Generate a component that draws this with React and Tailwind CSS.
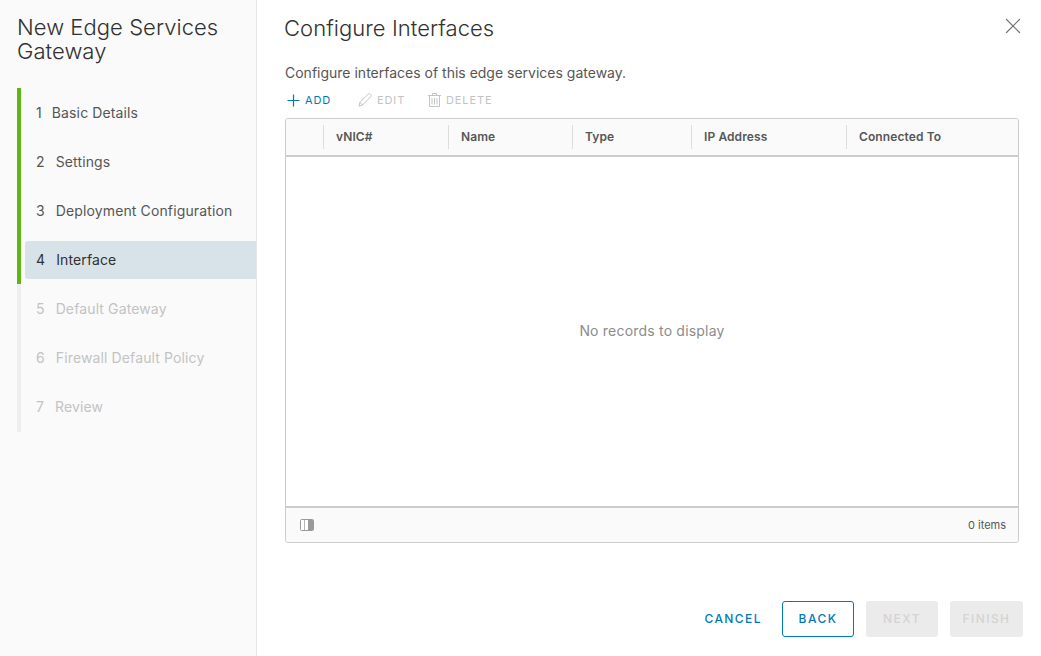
import { X } from "lucide-react";

const steps = [
    { n: 1, label: "Basic Details", state: "done", gap: "gap-[10px]" },
    { n: 2, label: "Settings", state: "done", gap: "gap-[11px]" },
    { n: 3, label: "Deployment Configuration", state: "done", gap: "gap-[11px]" },
    { n: 4, label: "Interface", state: "active", gap: "gap-[11px]" },
    { n: 5, label: "Default Gateway", state: "todo", gap: "gap-[11px]" },
    { n: 6, label: "Firewall Default Policy", state: "todo", gap: "gap-[11px]" },
    { n: 7, label: "Review", state: "todo", gap: "gap-[11px]" },
];

const columns = [
    { label: "vNIC#", width: "w-[125px]" },
    { label: "Name", width: "w-[124px]" },
    { label: "Type", width: "w-[119px]" },
    { label: "IP Address", width: "w-[155px]" },
    { label: "Connected To", width: "flex-1" },
];

function Step({ step }) {
    const border = step.state === "todo" ? "border-[#eeeeee]" : "border-[#60b515]";
    const text =
        step.state === "active"
            ? "bg-[#d8e3e9] text-[#313131]"
            : step.state === "done"
              ? "text-[#565656]"
              : "text-[#c3c3c3]";

    return (
        <div className={`flex h-[49px] items-start border-l-4 pl-1 ${border}`}>
            <div className={`mt-[6px] flex h-[38px] flex-1 items-center rounded-l-[3px] pb-[2px] pl-[11px] text-[14px] tracking-[0.125px] ${step.gap} ${text}`}>
                <span>{step.n}</span>
                <span>{step.label}</span>
            </div>
        </div>
    );
}

export default function App() {
    return (
        <div className="flex h-[656px] w-[1041px] overflow-hidden bg-white font-['Inter',sans-serif]">
            {/* Sidebar */}
            <aside className="h-full w-[257px] shrink-0 border-r border-[#e8e8e8] bg-[#fafafa] pl-[17px]">
                <h1 className="mt-[15px] h-[73px] text-[22px] font-light leading-[24px] tracking-[0.05px] text-[#313131]">
                    New Edge Services Gateway
                </h1>
                <div className="flex flex-col">
                    {steps.map((step) => (
                        <Step key={step.n} step={step} />
                    ))}
                    <div className="h-px border-l-4 border-[#eeeeee]" />
                </div>
            </aside>

            {/* Main */}
            <main className="flex h-full flex-1 flex-col pl-[27px] pr-[22px]">
                <div className="flex h-[55px] items-start justify-between pt-[15px]">
                    <h2 className="text-[22px] font-light leading-[26px] tracking-[0.05px] text-[#313131]">Configure Interfaces</h2>
                    <X className="-mr-[7px] -mt-[2px] text-[#747474]" size={26} strokeWidth={1.1} />
                </div>

                <p className="ml-px mt-[9px] text-[14px] leading-[18px] text-[#565656]">
                    Configure interfaces of this edge services gateway.
                </p>

                {/* Toolbar */}
                <div className="ml-[3px] mt-[6px] flex h-[24px] items-center text-[11px] tracking-[0.08em]">
                    <div className="flex w-[71px] items-center gap-[5px] text-[#0079b8]">
                        <svg width="13" height="13" viewBox="0 0 13 13" fill="none" stroke="currentColor" strokeWidth="1.2">
                            <path d="M6.5 0.5V12.5M0.5 6.5H12.5" />
                        </svg>
                        <span>ADD</span>
                    </div>
                    <div className="flex w-[70px] items-center gap-[5px] text-[#c3c3c3]">
                        <svg width="14" height="14" viewBox="0 0 14 14" fill="none" stroke="currentColor">
                            <path d="M1 13.2L1.9 9.4L10.4 0.9C10.9 0.4 11.6 0.4 12.1 0.9L13 1.8C13.5 2.3 13.5 3 13 3.5L4.6 12L1 13.2Z" />
                            <path d="M2 9.5L4.5 12" />
                        </svg>
                        <span>EDIT</span>
                    </div>
                    <div className="flex items-center gap-[5px] text-[#c3c3c3]">
                        <svg width="13" height="14" viewBox="0 0 13 14" fill="none" stroke="currentColor">
                            <path d="M0 2.5H13M4.5 2.5V0.5H8.5V2.5M1.5 2.5V13.5H11.5V2.5" />
                            <path d="M4 5V11.5M6.5 5V11.5M9 5V11.5" />
                        </svg>
                        <span>DELETE</span>
                    </div>
                </div>

                {/* Datagrid */}
                <div className="ml-px mt-[6px] flex h-[425px] w-[734px] flex-col rounded-[3px] border border-[#cccccc]">
                    <div className="flex h-[38px] shrink-0 items-center rounded-t-[3px] border-b-2 border-[#cccccc] bg-[#fafafa] text-[12px] font-semibold tracking-[0.1px] text-[#565656]">
                        <div className="w-[37px] shrink-0" />
                        {columns.map((col) => (
                            <div key={col.label} className={`flex h-[24px] shrink-0 items-center border-l border-[#dddddd] pl-3 ${col.width}`}>
                                {col.label}
                            </div>
                        ))}
                    </div>
                    <div className="flex flex-1 items-center justify-center pb-[2px] text-[14px] tracking-[0.2px] text-[#8c8c8c]">
                        No records to display
                    </div>
                    <div className="flex h-[36px] shrink-0 items-center justify-between rounded-b-[3px] border-t-2 border-[#cccccc] bg-[#fafafa] pl-[14px] pr-3 text-[11px] text-[#565656]">
                        <svg width="14" height="12" viewBox="0 0 14 12">
                            <rect x="0.5" y="0.5" width="13" height="11" rx="1" fill="#ffffff" stroke="#9a9a9a" />
                            <rect x="9" y="1" width="4" height="10" fill="#9a9a9a" />
                            <line x1="4.5" y1="1" x2="4.5" y2="11" stroke="#b5b5b5" />
                            <line x1="8.5" y1="1" x2="8.5" y2="11" stroke="#9a9a9a" />
                        </svg>
                        <span>0 items</span>
                    </div>
                </div>

                {/* Footer buttons */}
                <div className="-mr-1 mt-[58px] flex items-center justify-end text-[12px] font-medium tracking-[0.12em]">
                    <button className="mr-5 text-[#0079b8]">CANCEL</button>
                    <button className="mr-3 h-9 w-[72px] rounded-[3px] border border-[#0079b8] text-[#0079b8]">BACK</button>
                    <button className="mr-3 h-9 w-[72px] rounded-[3px] bg-[#ebebeb] text-[#d4d4d4]">NEXT</button>
                    <button className="h-9 w-[73px] rounded-[3px] bg-[#ebebeb] text-[#d4d4d4]">FINISH</button>
                </div>
            </main>
        </div>
    );
}
